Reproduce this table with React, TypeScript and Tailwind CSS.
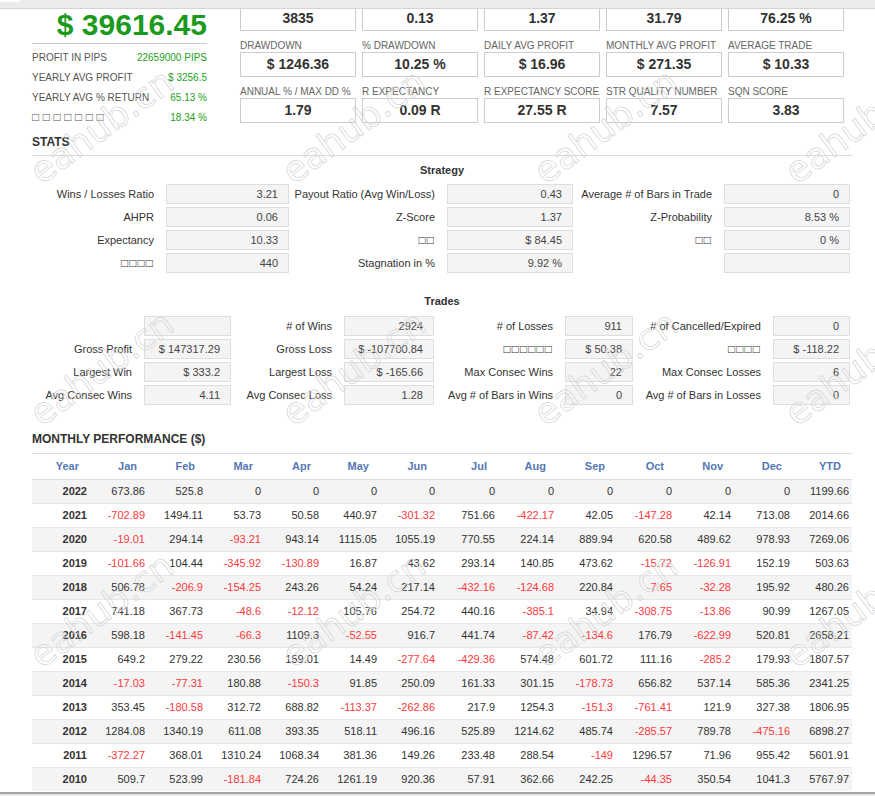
import React from 'react';

type Cell = { label: string; value: string | null };

// first row's labels sit above the scrolled viewport, so they are blank here
const TOP_STATS: { label: string; value: string }[][] = [
  [
    { label: '', value: '3835' },
    { label: '', value: '0.13' },
    { label: '', value: '1.37' },
    { label: '', value: '31.79' },
    { label: '', value: '76.25 %' },
  ],
  [
    { label: 'Drawdown', value: '$ 1246.36' },
    { label: '% Drawdown', value: '10.25 %' },
    { label: 'Daily Avg Profit', value: '$ 16.96' },
    { label: 'Monthly Avg Profit', value: '$ 271.35' },
    { label: 'Average Trade', value: '$ 10.33' },
  ],
  [
    { label: 'Annual % / Max DD %', value: '1.79' },
    { label: 'R Expectancy', value: '0.09 R' },
    { label: 'R Expectancy Score', value: '27.55 R' },
    { label: 'STR Quality Number', value: '7.57' },
    { label: 'SQN Score', value: '3.83' },
  ],
];

const SUMMARY = [
  { label: 'PROFIT IN PIPS', value: '22659000 PIPS' },
  { label: 'YEARLY AVG PROFIT', value: '$ 3256.5' },
  { label: 'YEARLY AVG % RETURN', value: '65.13 %' },
  { label: '□□□□□□□', value: '18.34 %' },
];

const STRATEGY: Cell[][] = [
  [
    { label: 'Wins / Losses Ratio', value: '3.21' },
    { label: 'Payout Ratio (Avg Win/Loss)', value: '0.43' },
    { label: 'Average # of Bars in Trade', value: '0' },
  ],
  [
    { label: 'AHPR', value: '0.06' },
    { label: 'Z-Score', value: '1.37' },
    { label: 'Z-Probability', value: '8.53 %' },
  ],
  [
    { label: 'Expectancy', value: '10.33' },
    { label: '□□', value: '$ 84.45' },
    { label: '□□', value: '0 %' },
  ],
  [
    { label: '□□□□', value: '440' },
    { label: 'Stagnation in %', value: '9.92 %' },
    { label: '', value: '' },
  ],
];

const STRATEGY_W = [
  ['w-[134px]', 'w-[123px]'],
  ['w-[158px]', 'w-[126px]'],
  ['w-[151px]', 'w-[126px]'],
];

const TRADES: Cell[][] = [
  [
    { label: '', value: '' },
    { label: '# of Wins', value: '2924' },
    { label: '# of Losses', value: '911' },
    { label: '# of Cancelled/Expired', value: '0' },
  ],
  [
    { label: 'Gross Profit', value: '$ 147317.29' },
    { label: 'Gross Loss', value: '$ -107700.84' },
    { label: '□□□□□□', value: '$ 50.38' },
    { label: '□□□□', value: '$ -118.22' },
  ],
  [
    { label: 'Largest Win', value: '$ 333.2' },
    { label: 'Largest Loss', value: '$ -165.66' },
    { label: 'Max Consec Wins', value: '22' },
    { label: 'Max Consec Losses', value: '6' },
  ],
  [
    { label: 'Avg Consec Wins', value: '4.11' },
    { label: 'Avg Consec Loss', value: '1.28' },
    { label: 'Avg # of Bars in Wins', value: '0' },
    { label: 'Avg # of Bars in Losses', value: '0' },
  ],
];

const TRADES_W = [
  ['w-[112px]', 'w-[87px]'],
  ['w-[113px]', 'w-[90px]'],
  ['w-[131px]', 'w-[68px]'],
  ['w-[140px]', 'w-[77px]'],
];

const MONTHS = ['Jan', 'Feb', 'Mar', 'Apr', 'May', 'Jun', 'Jul', 'Aug', 'Sep', 'Oct', 'Nov', 'Dec', 'YTD'];
const COL_W = ['w-[58px]', 'w-[58px]', 'w-[58px]', 'w-[58px]', 'w-[58px]', 'w-[58px]', 'w-[58px]', 'w-[60px]', 'w-[59px]', 'w-[59px]', 'w-[59px]', 'w-[59px]', 'w-[59px]', 'w-[59px]'];

const MONTHLY: [string, number[]][] = [
  ['2022', [673.86, 525.8, 0, 0, 0, 0, 0, 0, 0, 0, 0, 0, 1199.66]],
  ['2021', [-702.89, 1494.11, 53.73, 50.58, 440.97, -301.32, 751.66, -422.17, 42.05, -147.28, 42.14, 713.08, 2014.66]],
  ['2020', [-19.01, 294.14, -93.21, 943.14, 1115.05, 1055.19, 770.55, 224.14, 889.94, 620.58, 489.62, 978.93, 7269.06]],
  ['2019', [-101.66, 104.44, -345.92, -130.89, 16.87, 43.62, 293.14, 140.85, 473.62, -15.72, -126.91, 152.19, 503.63]],
  ['2018', [506.78, -206.9, -154.25, 243.26, 54.24, 217.14, -432.16, -124.68, 220.84, -7.65, -32.28, 195.92, 480.26]],
  ['2017', [741.18, 367.73, -48.6, -12.12, 105.76, 254.72, 440.16, -385.1, 34.94, -308.75, -13.86, 90.99, 1267.05]],
  ['2016', [598.18, -141.45, -66.3, 1109.3, -52.55, 916.7, 441.74, -87.42, -134.6, 176.79, -622.99, 520.81, 2658.21]],
  ['2015', [649.2, 279.22, 230.56, 159.01, 14.49, -277.64, -429.36, 574.48, 601.72, 111.16, -285.2, 179.93, 1807.57]],
  ['2014', [-17.03, -77.31, 180.88, -150.3, 91.85, 250.09, 161.33, 301.15, -178.73, 656.82, 537.14, 585.36, 2341.25]],
  ['2013', [353.45, -180.58, 312.72, 688.82, -113.37, -262.86, 217.9, 1254.3, -151.3, -761.41, 121.9, 327.38, 1806.95]],
  ['2012', [1284.08, 1340.19, 611.08, 393.35, 518.11, 496.16, 525.89, 1214.62, 485.74, -285.57, 789.78, -475.16, 6898.27]],
  ['2011', [-372.27, 368.01, 1310.24, 1068.34, 381.36, 149.26, 233.48, 288.54, -149, 1296.57, 71.96, 955.42, 5601.91]],
  ['2010', [509.7, 523.99, -181.84, 724.26, 1261.19, 920.36, 57.91, 362.66, 242.25, -44.35, 350.54, 1041.3, 5767.97]],
];

// watermark anchors (bottom-left of the "e")
const WM_X = [45, 297, 549, 800];
const WM_Y = [190, 432, 674];

const isTofu = (s: string) => s.length > 0 && /^□+$/.test(s);

function StatBox({ label, value }: { label: string; value: string }) {
  return (
    <div>
      <div className="h-[13px] text-[10px] leading-[13px] text-[#666] uppercase whitespace-nowrap">{label}</div>
      <div className="h-[25px] border border-[#ccc] bg-white flex items-center justify-center text-[14px] font-bold text-[#333]">
        {value}
      </div>
    </div>
  );
}

function FieldRow({ cells, widths }: { cells: Cell[]; widths: string[][] }) {
  return (
    <div className="flex h-[20px]">
      {cells.map((c, i) => (
        <React.Fragment key={i}>
          <div className={`${widths[i][0]} shrink-0 pr-[12px] text-right text-[11px] leading-[20px] text-[#333] whitespace-nowrap`}>
            {isTofu(c.label) ? <span className="text-[12px] tracking-[1px]">{c.label}</span> : c.label}
          </div>
          <div className={`${widths[i][1]} shrink-0 h-[20px] bg-[#f4f4f4] border border-[#dedede] pr-[10px] text-right text-[11px] leading-[18px] text-[#444] whitespace-nowrap`}>
            {c.value}
          </div>
        </React.Fragment>
      ))}
    </div>
  );
}

export default function App() {
  return (
    <div className="relative h-[796px] w-full overflow-hidden bg-white flex flex-col font-['Liberation_Sans',Arial,sans-serif] text-[#333]">
      <div className="h-[9px] shrink-0 bg-[#ececec] border-b border-[#d4d4d4] relative z-10">
        <div className="w-[20px] h-[2px] bg-white" />
      </div>

      <main className="flex-1 overflow-hidden">
        <div className="ml-[32px] w-[820px]">
          {/* summary + stat boxes */}
          <div className="flex items-start">
            <div className="w-[175px] shrink-0">
              <div className="text-[30px] leading-[32px] font-bold text-right text-[#1b9a1b] pb-[2px] border-b border-[#ccc]">
                $ 39616.45
              </div>
              <div className="mt-[3px]">
                {SUMMARY.map(s => (
                  <div key={s.label} className="h-[20px] flex items-center justify-between text-[10px]">
                    {isTofu(s.label) ? (
                      <span className="text-[#555] whitespace-nowrap text-[12px] tracking-[3.5px]">{s.label}</span>
                    ) : (
                      <span className="text-[#555] whitespace-nowrap">{s.label}</span>
                    )}
                    <span className="text-[#22a022] whitespace-nowrap">{s.value}</span>
                  </div>
                ))}
              </div>
            </div>
            <div className="ml-[33px] w-[604px] mt-[-16px] flex flex-col gap-[8px]">
              {TOP_STATS.map((row, r) => (
                <div key={r} className="grid grid-cols-5 gap-[6px]">
                  {row.map((s, i) => (
                    <StatBox key={i} label={s.label} value={s.value} />
                  ))}
                </div>
              ))}
            </div>
          </div>

          {/* stats */}
          <div className="mt-[7px] text-[12px] leading-[16px] font-bold text-[#333] pb-[5px] border-b border-[#ddd]">STATS</div>

          <div className="mt-[7px] text-[11px] leading-[14px] font-bold text-center text-[#333]">Strategy</div>
          <div className="mt-[7px] flex flex-col gap-[3px]">
            {STRATEGY.map((row, i) => (
              <FieldRow key={i} cells={row} widths={STRATEGY_W} />
            ))}
          </div>

          <div className="mt-[21px] text-[11px] leading-[14px] font-bold text-center text-[#333]">Trades</div>
          <div className="mt-[8px] flex flex-col gap-[3px]">
            {TRADES.map((row, i) => (
              <FieldRow key={i} cells={row} widths={TRADES_W} />
            ))}
          </div>

          {/* monthly performance */}
          <div className="mt-[26px] text-[12px] leading-[16px] font-bold text-[#333] pb-[6px] border-b border-[#ddd]">
            MONTHLY PERFORMANCE ($)
          </div>
          <table className="w-[820px] table-fixed text-[11px]">
            <thead>
              <tr className="h-[25px] border-b border-[#ddd]">
                {['Year', ...MONTHS].map((m, i) => (
                  <th key={m} className={`${COL_W[i]} pr-[11px] text-right font-bold text-[#5577b5]`}>
                    {m}
                  </th>
                ))}
              </tr>
            </thead>
            <tbody>
              {MONTHLY.map(([year, vals], r) => (
                <tr key={year} className={`h-[24px] border-t border-[#e6e6e6] ${r % 2 === 0 ? 'bg-[#f4f4f4]' : 'bg-white'}`}>
                  <td className="pr-[3px] text-right font-bold text-[#333]">{year}</td>
                  {vals.map((v, i) => (
                    <td key={i} className={`pr-[3px] text-right ${v < 0 ? 'text-[#ff3a3a]' : 'text-[#333]'}`}>
                      {v}
                    </td>
                  ))}
                </tr>
              ))}
            </tbody>
          </table>
        </div>
      </main>

      <div className="h-[4px] shrink-0 border-t-2 border-[#a4a4a4] bg-[#e6e6e6]" />

      {/* eahub.cn watermark overlay */}
      <div className="absolute inset-0 pointer-events-none z-20">
        {WM_Y.map(y =>
          WM_X.map(x => (
            <span
              key={`${x}-${y}`}
              className="absolute origin-bottom-left -rotate-[36deg] text-[36px] leading-[36px] font-normal text-transparent whitespace-nowrap font-['DejaVu_Sans',sans-serif] [-webkit-text-stroke:0.7px_#d4d4d4]"
              style={{ left: x, top: y - 36 }}
            >
              eahub.cn
            </span>
          ))
        )}
      </div>
    </div>
  );
}
